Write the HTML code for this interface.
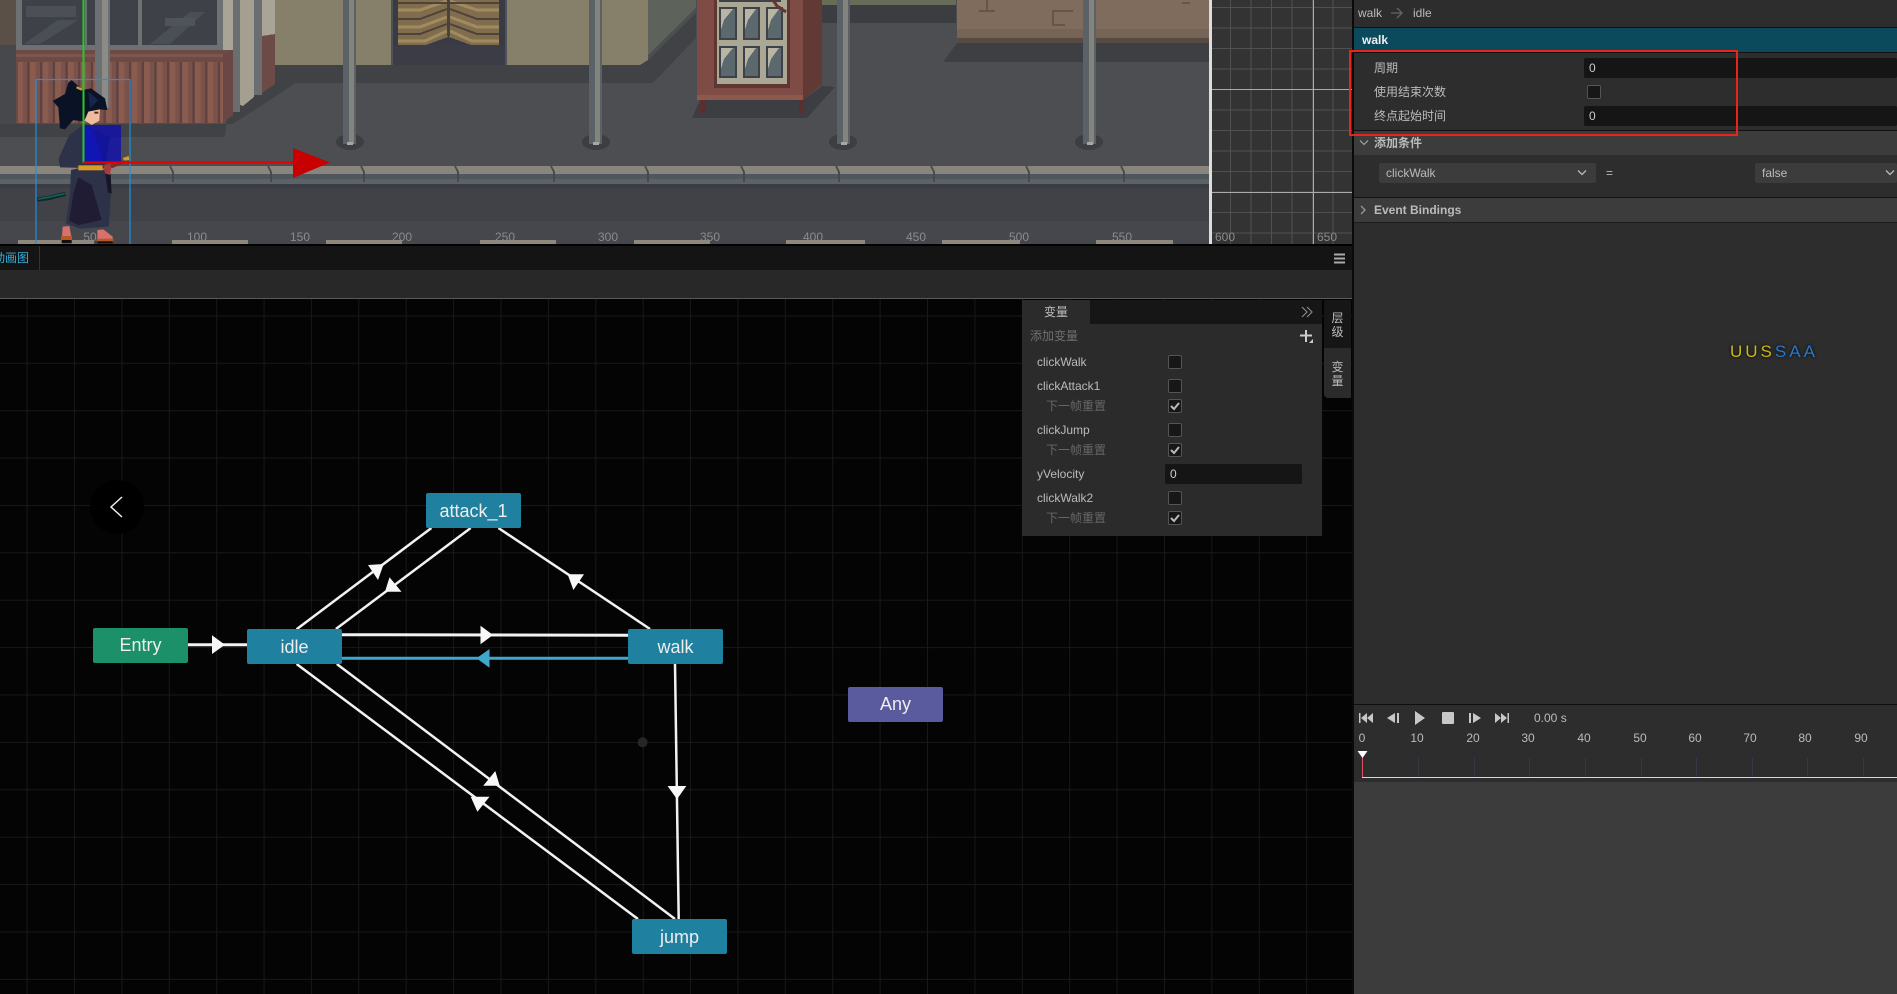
<!DOCTYPE html>
<html><head><meta charset="utf-8"><title>Animation Graph</title>
<style>
html,body{margin:0;padding:0;background:#2d2d2d;}
#app{position:relative;width:1897px;height:994px;overflow:hidden;background:#2d2d2d;font:12px "Liberation Sans","Noto Sans CJK SC",sans-serif;color:#bbb;}
.a{position:absolute;}
.t{position:absolute;white-space:nowrap;line-height:16px;}
.ruler{position:absolute;top:229px;width:40px;text-align:center;color:#8b8b8b;font-size:12px;line-height:16px;}
.node{position:absolute;width:95px;height:35px;line-height:37px;text-align:center;background:#20809f;color:#eee;font-size:18px;border-radius:2px;}
.cb{position:absolute;width:12px;height:12px;background:#171717;border:1px solid #555;border-radius:2px;}
.cb svg{position:absolute;left:0;top:0;}
.inp{position:absolute;background:#151515;border-radius:2px;color:#ccc;line-height:20px;padding-left:5px;box-sizing:border-box;height:20px;}
.sel{position:absolute;background:#3c3c3c;border-radius:2px;height:20px;line-height:20px;color:#bbb;padding-left:7px;box-sizing:border-box;}
.tl{position:absolute;top:730px;width:30px;text-align:center;color:#bbb;line-height:16px;}
.tick{position:absolute;top:758px;width:1px;height:19px;background:#343948;}
</style></head><body><div id="app">

<!-- scene -->
<svg class="a" style="left:0;top:0" width="1212" height="245" viewBox="0 0 1212 245" shape-rendering="crispEdges">
<defs><pattern id="st" width="12.7" height="62" patternUnits="userSpaceOnUse" x="17" y="62"><rect width="12.7" height="62" fill="#5f4240"/><rect x="0" width="10.4" height="62" fill="#8a5c50"/><rect x="6" width="4.4" height="62" fill="#7b5249"/></pattern>
<g id="wood"><rect x="398" y="0" width="50" height="37" fill="#7f6d4e"/><polygon points="398,37 448,37 448,37 426,45 398,45" fill="#7f6d4e"/>
<path d="M398 10H420L447 1M398 27H420L447 17M398 41H425L447 31" stroke="#a08a5e" stroke-width="3" fill="none"/>
<path d="M398 3H447M398 19H420L447 9M398 34H420L447 24" stroke="#4f4238" stroke-width="2" fill="none"/></g></defs>
<rect width="1212" height="245" fill="#4c4e52"/>
<rect x="0" y="0" width="16" height="45" fill="#5a5048"/><rect x="0" y="45" width="16" height="92" fill="#46484b"/>
<rect x="275" y="0" width="373" height="65" fill="#86806a"/>
<polygon points="648,0 696,0 696,8 648,55" fill="#5d635a"/>
<polygon points="275,65 640,65 648,60 696,13 696,38 653,83 275,83" fill="#404246"/>
<polygon points="0,124 233,124 296,83 275,65 233,65 225,137 0,137" fill="#404246"/>
<!-- shop -->
<rect x="16" y="0" width="207" height="50" fill="#6e7072"/>
<rect x="22" y="0" width="116" height="45" fill="#3e4148"/><rect x="142" y="0" width="75" height="45" fill="#3e4148"/>
<polygon points="24,44 58,20 78,20 40,44" fill="#4a4f55"/><polygon points="150,44 190,12 205,12 170,44" fill="#4a4f55"/>
<rect x="26" y="6" width="50" height="11" fill="#4c5056"/><rect x="165" y="18" width="30" height="8" fill="#4f545a"/>
<rect x="85" y="0" width="2" height="45" fill="#6e7072"/>
<rect x="16" y="50" width="217" height="12" fill="#6c4a46"/><rect x="16" y="54" width="207" height="3" fill="#7e5650"/>
<rect x="16" y="62" width="207" height="61" fill="url(#st)"/>
<rect x="16" y="62" width="2" height="61" fill="#6c4a46"/>
<polygon points="223,55 233,50 233,115 223,123" fill="#6a4644"/>
<rect x="223" y="0" width="10" height="50" fill="#a8a496"/>
<rect x="233" y="0" width="7" height="112" fill="#6a6e70"/>
<polygon points="240,0 254,0 254,97 243,106 240,105" fill="#a49f90"/>
<rect x="254" y="0" width="8" height="95" fill="#6a6e70"/>
<rect x="262" y="0" width="13" height="36" fill="#a8a496"/>
<polygon points="262,36 275,34 275,84 262,93" fill="#6c4a46"/>
<!-- pole behind char -->
<rect x="95" y="0" width="15" height="108" fill="#6c7074"/><rect x="102" y="0" width="6" height="108" fill="#8c8c86"/>
<!-- swing door -->
<rect x="391" y="0" width="116" height="65" fill="#3a3a44"/>
<rect x="391" y="0" width="2" height="65" fill="#4e5358"/><rect x="505" y="0" width="2" height="65" fill="#4e5358"/>
<use href="#wood"/><use href="#wood" transform="matrix(-1 0 0 1 897 0)"/>
<rect x="447" y="0" width="3" height="36" fill="#4a4238"/>
<rect x="393" y="45" width="112" height="20" fill="#3c3c46"/>
<!-- door cabinet -->
<polygon points="700,100 803,100 822,86 835,87 807,118 692,118" fill="#3d3e42"/>
<rect x="700" y="100" width="6" height="13" fill="#5a2f2e"/><rect x="799" y="100" width="5" height="13" fill="#5a2f2e"/>
<rect x="697" y="0" width="106" height="100" fill="#7f4c45"/>
<rect x="697" y="95" width="106" height="5" fill="#8f584d"/>
<polygon points="803,0 822,0 822,84 803,100" fill="#633936"/>
<rect x="714" y="0" width="76" height="88" fill="#5e3634"/>
<rect x="717" y="0" width="70" height="84" fill="#aaa795"/>
<g fill="#3e4248"><rect x="719" y="7" width="18" height="33"/><rect x="743" y="7" width="17" height="33"/><rect x="766" y="7" width="17" height="33"/><rect x="719" y="46" width="18" height="32"/><rect x="743" y="46" width="17" height="32"/><rect x="766" y="46" width="17" height="32"/><rect x="719" y="0" width="64" height="2"/></g>
<g fill="#5b686e"><rect x="721" y="9" width="14" height="29"/><rect x="745" y="9" width="13" height="29"/><rect x="768" y="9" width="13" height="29"/><rect x="721" y="48" width="14" height="28"/><rect x="745" y="48" width="13" height="28"/><rect x="768" y="48" width="13" height="28"/></g>
<g fill="#b8b5a4"><polygon points="721,9 733,9 724,20 721,30"/><polygon points="745,9 756,9 748,20 745,30"/><polygon points="768,9 779,9 771,20 768,30"/><polygon points="721,48 733,48 724,59 721,69"/><polygon points="745,48 756,48 748,59 745,69"/><polygon points="768,48 779,48 771,59 768,69"/></g>
<path d="M773 0l4 6 9 6" stroke="#6a3330" stroke-width="3" fill="none"/><rect x="781" y="0" width="5" height="3" fill="#aaa795"/>
<rect x="822" y="0" width="134" height="5" fill="#666c58"/><rect x="822" y="5" width="134" height="18" fill="#3b3d41"/>
<!-- crate -->
<polygon points="957,43 1209,43 1209,62 943,62" fill="#3d3f43"/>
<rect x="957" y="0" width="252" height="43" fill="#806c5c"/>
<rect x="957" y="29" width="252" height="9" fill="#766456"/><rect x="957" y="38" width="252" height="5" fill="#574a42"/>
<path d="M987 0v11M979 11h16M1073 11h-20v14h12M1190 3h-8" stroke="#665649" stroke-width="2" fill="none"/>
<!-- poles -->
<g><ellipse cx="350" cy="142" rx="14" ry="8" fill="#3d3e42"/><rect x="343" y="0" width="13" height="144" fill="#5a6268"/><rect x="349" y="0" width="5" height="144" fill="#84847e"/><rect x="347" y="142" width="6" height="3" fill="#a8a8a0"/></g>
<g><ellipse cx="596" cy="142" rx="14" ry="8" fill="#3d3e42"/><rect x="589" y="0" width="13" height="144" fill="#5a6268"/><rect x="595" y="0" width="5" height="144" fill="#84847e"/><rect x="593" y="142" width="6" height="3" fill="#a8a8a0"/></g>
<g><ellipse cx="843" cy="142" rx="14" ry="8" fill="#3d3e42"/><rect x="837" y="0" width="13" height="144" fill="#5a6268"/><rect x="843" y="0" width="5" height="144" fill="#84847e"/><rect x="841" y="142" width="6" height="3" fill="#a8a8a0"/></g>
<g><ellipse cx="1089" cy="142" rx="14" ry="8" fill="#3d3e42"/><rect x="1083" y="0" width="13" height="144" fill="#5a6268"/><rect x="1089" y="0" width="5" height="144" fill="#84847e"/><rect x="1087" y="142" width="6" height="3" fill="#a8a8a0"/></g>
<!-- curb & road -->
<rect x="0" y="166" width="1209" height="8" fill="#8a857c"/>
<rect x="0" y="174" width="1209" height="5" fill="#4f565c"/><rect x="0" y="179" width="1209" height="5" fill="#5b6268"/>
<rect x="0" y="184" width="1209" height="4" fill="#3c3d42"/>
<rect x="0" y="188" width="1209" height="33" fill="#414247"/>
<rect x="0" y="221" width="1209" height="24" fill="#46474d"/>
<path d="M170 166l3 6v10M268 166l3 6v10M361 166l3 6v10M455 166l3 6v10M551 166l3 6v10M645 166l3 6v10M741 166l3 6v10M836 166l3 6v10M931 166l3 6v10M1026 166l3 6v10M1121 166l3 6v10" stroke="#454a50" stroke-width="2" fill="none"/>
<g fill="#8d877c"><rect x="18" y="240" width="76" height="5"/><rect x="172" y="240" width="76" height="5"/><rect x="326" y="240" width="76" height="5"/><rect x="480" y="240" width="76" height="5"/><rect x="634" y="240" width="76" height="5"/><rect x="786" y="240" width="79" height="5"/><rect x="942" y="240" width="78" height="5"/><rect x="1096" y="240" width="77" height="5"/></g>
<rect x="1209" y="0" width="3" height="245" fill="#ddd"/>
</svg>

<!-- grid side -->
<div class="a" style="left:1212px;top:0;width:140px;height:245px;background-color:#333;background-image:linear-gradient(#505050 1px,transparent 1px),linear-gradient(90deg,#505050 1px,transparent 1px);background-size:20.5px 20.5px;background-position:18px 7px;"></div>
<div class="a" style="left:1212px;top:89px;width:140px;height:1px;background:#aaa;"></div>
<div class="a" style="left:1212px;top:192px;width:140px;height:1px;background:#aaa;"></div>
<div class="a" style="left:1313px;top:0;width:1px;height:245px;background:#aaa;"></div>

<!-- character and gizmo -->
<svg class="a" style="left:0;top:0" width="340" height="245" viewBox="0 0 340 245">
<g transform="translate(10 70) scale(.33333)">
<path d="M82 389l40-6 8-3 36-8" stroke="#0d2a2a" stroke-width="13" fill="none"/>
<path d="M84 387l38-6 8-3 34-7" stroke="#176058" stroke-width="5" fill="none"/>
<polygon points="178,195 215,168 300,200 285,295 150,292 146,265" fill="#2d3248"/>
<polygon points="183,300 205,295 285,300 303,370 296,470 210,476 168,460 180,370" fill="#2d3248"/>
<polygon points="205,322 245,345 275,450 205,465 178,452 190,370" fill="#1f1c34"/>
<polygon points="285,305 302,312 305,370 294,368" fill="#171626"/>
<polygon points="158,470 178,468 184,500 156,500" fill="#d87070"/>
<polygon points="262,480 280,478 308,500 308,508 262,508" fill="#d87070"/>
<rect x="153" y="498" width="33" height="12" fill="#b85a20"/><rect x="155" y="510" width="30" height="10" fill="#140f10"/>
<rect x="260" y="506" width="50" height="8" fill="#b85a20"/><rect x="262" y="514" width="46" height="6" fill="#140f10"/>
<rect x="205" y="286" width="73" height="15" fill="#d89a28"/>
<polygon points="280,285 305,282 300,315 285,310" fill="#a83c38"/>
<polygon points="300,285 345,270 350,276 305,295" fill="#7a2c2a"/>
<polygon points="338,264 356,258 358,270 342,272" fill="#d89a28"/>
<polygon points="225,125 270,118 268,152 245,165 222,150" fill="#f0bca0"/>
<rect x="253" y="125" width="12" height="6" fill="#5a2420"/>
<path d="M185 30L207 50L218 60L243 55L285 85L292 120L268 118L235 125L222 155L190 150L165 178L150 175L145 112L128 93L165 72L175 38Z" fill="#0a1226"/>
<path d="M235 65L265 90L240 115Z" fill="#14264a"/>
<rect x="199" y="52" width="18" height="7" fill="#d89a28" transform="rotate(25 208 55)"/>
<polygon points="222,170 245,240 222,252" fill="#8a60c0"/>
<polygon points="218,168 248,175 280,277 218,277" fill="#2436a8"/>
</g>
<rect x="83" y="125" width="38" height="37" fill="#0808b8" fill-opacity=".72"/>
<rect x="36" y="79.500" width="94" height="170" fill="none" stroke="#2090e0" stroke-width="1.200"/>
<rect x="82.500" y="0" width="2" height="163" fill="#28c828"/>
<rect x="83" y="161.500" width="212" height="2" fill="#e60000"/>
<polygon points="293,148 330,162.500 293,178" fill="#c80000"/>
</svg>

<div class="ruler" style="left:70px">50</div><div class="ruler" style="left:177px">100</div><div class="ruler" style="left:280px">150</div><div class="ruler" style="left:382px">200</div><div class="ruler" style="left:485px">250</div><div class="ruler" style="left:588px">300</div><div class="ruler" style="left:690px">350</div><div class="ruler" style="left:793px">400</div><div class="ruler" style="left:896px">450</div><div class="ruler" style="left:999px">500</div><div class="ruler" style="left:1102px">550</div><div class="ruler" style="left:1205px">600</div><div class="ruler" style="left:1307px">650</div>

<!-- tab bar -->
<div class="a" style="left:0;top:244px;width:1352px;height:2px;background:#000;"></div>
<div class="a" style="left:0;top:246px;width:1352px;height:24px;background:#141414;"></div>
<div class="a" style="left:0;top:246px;width:39px;height:24px;border-right:1px solid #333;overflow:hidden;"><span class="t" style="left:-7px;top:4px;color:#33aedb;">动画图</span></div>
<svg class="a" style="left:1333px;top:253px" width="13" height="11"><path d="M1 1.500h11M1 5.500h11M1 9.500h11" stroke="#aaa" stroke-width="2"/></svg>
<div class="a" style="left:0;top:270px;width:1352px;height:28px;background:#282828;"></div>
<div class="a" style="left:0;top:298px;width:1352px;height:1px;background:#5a5a5a;"></div>

<!-- graph -->
<div class="a" style="left:0;top:299px;width:1352px;height:695px;background-color:#040404;background-image:linear-gradient(#181818 1px,transparent 1px),linear-gradient(90deg,#181818 1px,transparent 1px);background-size:47.4px 47.4px;background-position:26.6px 16.4px;"></div>

<svg class="a" style="left:0;top:299px" width="1352" height="695" viewBox="0 299 1352 695">
<circle cx="117" cy="507" r="27" fill="#000"/>
<path d="M122 497l-11 10 11 10" stroke="#eee" stroke-width="1.500" fill="none"/>
<circle cx="642.600" cy="742.300" r="5" fill="#262626"/>
<g stroke="#f2f2f2" stroke-width="2.500" fill="none">
<line x1="188" y1="644.700" x2="248" y2="644.700" stroke-width="3"/>
<line x1="296.600" y1="629.300" x2="431.400" y2="528"/>
<line x1="470.700" y1="528" x2="335.900" y2="629"/>
<line x1="650" y1="629" x2="498.400" y2="528"/>
<line x1="342" y1="634.700" x2="628" y2="635.300" stroke-width="3"/>
<line x1="675" y1="664" x2="678.700" y2="919"/>
<line x1="336.800" y1="664" x2="675" y2="919"/>
<line x1="638" y1="919" x2="296.600" y2="664"/>
</g>
<line x1="342" y1="658.300" x2="628" y2="658.300" stroke="#3fa8cc" stroke-width="3"/>
<polygon points="489.500,649 476.500,658.300 489.500,667.700" fill="#3fa8cc"/>
<g fill="#f7f7f7">
<polygon points="212,635.300 225,644.700 212,654"/>
<polygon points="368,565 383.700,564 378,580"/>
<polygon points="389.500,577.300 401.500,591.700 385,591.700"/>
<polygon points="567.600,574.300 584,574.300 573.400,590"/>
<polygon points="480.500,625.700 493,635 480.500,644.300"/>
<polygon points="667.600,786 686.300,786 677,799.300"/>
<polygon points="495.300,771 499.700,785.700 483.200,785.700"/>
<polygon points="470.700,796.700 489.500,796.700 477.400,811.700"/>
</g>
</svg>

<div class="node" style="left:426px;top:493px;">attack_1</div>
<div class="node" style="left:93px;top:628px;background:#1c9068;line-height:35px;">Entry</div>
<div class="node" style="left:247px;top:629px;">idle</div>
<div class="node" style="left:628px;top:629px;">walk</div>
<div class="node" style="left:632px;top:919px;">jump</div>
<div class="node" style="left:848px;top:687px;background:#5a5a9e;line-height:35px;">Any</div>

<!-- variables panel -->
<div class="a" style="left:1022px;top:300px;width:300px;height:236px;background:#2b2b2b;"></div>
<div class="a" style="left:1090px;top:300px;width:232px;height:24px;background:#161616;"></div>
<div class="t" style="left:1022px;top:304px;width:68px;text-align:center;color:#bbb;">变量</div>
<svg class="a" style="left:1301px;top:306px" width="12" height="12"><path d="M1 1l5 5-5 5M6 1l5 5-5 5" stroke="#888" stroke-width="1.200" fill="none"/></svg>
<div class="t" style="left:1030px;top:328px;color:#6f6f6f;">添加变量</div>
<svg class="a" style="left:1300px;top:329px" width="14" height="14"><path d="M6 1v12M0 6.500h12" stroke="#ccc" stroke-width="2"/><path d="M13 10v4h-4z" fill="#ccc"/></svg>
<div class="t" style="left:1037px;top:354px;">clickWalk</div>
<div class="t" style="left:1037px;top:378px;">clickAttack1</div>
<div class="t" style="left:1046px;top:398px;color:#666;">下一帧重置</div>
<div class="t" style="left:1037px;top:422px;">clickJump</div>
<div class="t" style="left:1046px;top:442px;color:#666;">下一帧重置</div>
<div class="t" style="left:1037px;top:466px;">yVelocity</div>
<div class="t" style="left:1037px;top:490px;">clickWalk2</div>
<div class="t" style="left:1046px;top:510px;color:#666;">下一帧重置</div>
<div class="cb" style="left:1168px;top:355px;"></div>
<div class="cb" style="left:1168px;top:379px;"></div>
<div class="cb" style="left:1168px;top:399px;"><svg width="12" height="12"><path d="M2 6l3 3 5-6" stroke="#bbb" stroke-width="2" fill="none"/></svg></div>
<div class="cb" style="left:1168px;top:423px;"></div>
<div class="cb" style="left:1168px;top:443px;"><svg width="12" height="12"><path d="M2 6l3 3 5-6" stroke="#bbb" stroke-width="2" fill="none"/></svg></div>
<div class="inp" style="left:1165px;top:464px;width:137px;">0</div>
<div class="cb" style="left:1168px;top:491px;"></div>
<div class="cb" style="left:1168px;top:511px;"><svg width="12" height="12"><path d="M2 6l3 3 5-6" stroke="#bbb" stroke-width="2" fill="none"/></svg></div>

<div class="a" style="left:1324px;top:300px;width:27px;height:48px;background:#161616;border-radius:2px 0 0 0;"></div>
<div class="a" style="left:1324px;top:348px;width:27px;height:50px;background:#2b2b2b;border-radius:0 0 0 4px;"></div>
<div class="t" style="left:1324px;top:311px;width:27px;text-align:center;color:#bbb;line-height:14px;white-space:normal;">层<br>级</div>
<div class="t" style="left:1324px;top:360px;width:27px;text-align:center;color:#bbb;line-height:14px;white-space:normal;">变<br>量</div>

<!-- right panel -->
<div class="a" style="left:1352px;top:0;width:2px;height:994px;background:#0a0a0a;"></div>
<div class="a" style="left:1354px;top:0;width:543px;height:704px;background:#2d2d2d;"></div>
<div class="t" style="left:1358px;top:5px;">walk</div>
<svg class="a" style="left:1390px;top:6px" width="14" height="14"><path d="M1 7h11M7 2l5 5-5 5" stroke="#666" stroke-width="1.300" fill="none"/></svg>
<div class="t" style="left:1413px;top:5px;">idle</div>
<div class="a" style="left:1354px;top:27px;width:543px;height:1px;background:#111;"></div>
<div class="a" style="left:1354px;top:28px;width:543px;height:24px;background:#0b4a5c;"></div>
<div class="t" style="left:1362px;top:32px;color:#eee;font-weight:bold;">walk</div>
<div class="a" style="left:1354px;top:52px;width:543px;height:1px;background:#111;"></div>
<div class="t" style="left:1374px;top:60px;">周期</div>
<div class="inp" style="left:1584px;top:58px;width:313px;">0</div>
<div class="t" style="left:1374px;top:84px;">使用结束次数</div>
<div class="cb" style="left:1587px;top:85px;"></div>
<div class="t" style="left:1374px;top:108px;">终点起始时间</div>
<div class="inp" style="left:1584px;top:106px;width:313px;">0</div>
<div class="a" style="left:1354px;top:130px;width:543px;height:1px;background:#111;"></div>
<div class="a" style="left:1354px;top:131px;width:543px;height:24px;background:#3c3c3c;"></div>
<svg class="a" style="left:1358px;top:138px" width="12" height="10"><path d="M2 2.500l4 4 4-4" stroke="#999" stroke-width="1.300" fill="none"/></svg>
<div class="t" style="left:1374px;top:135px;font-weight:bold;">添加条件</div>
<div class="sel" style="left:1379px;top:163px;width:217px;">clickWalk</div>
<svg class="a" style="left:1576px;top:168px" width="12" height="10"><path d="M2 2.500l4 4 4-4" stroke="#bbb" stroke-width="1.300" fill="none"/></svg>
<div class="t" style="left:1606px;top:165px;">=</div>
<div class="sel" style="left:1755px;top:163px;width:142px;">false</div>
<svg class="a" style="left:1884px;top:168px" width="12" height="10"><path d="M2 2.500l4 4 4-4" stroke="#bbb" stroke-width="1.300" fill="none"/></svg>
<div class="a" style="left:1354px;top:197px;width:543px;height:1px;background:#111;"></div>
<div class="a" style="left:1354px;top:198px;width:543px;height:24px;background:#3c3c3c;"></div>
<svg class="a" style="left:1358px;top:204px" width="10" height="12"><path d="M3 2l4 4-4 4" stroke="#999" stroke-width="1.300" fill="none"/></svg>
<div class="t" style="left:1374px;top:202px;font-weight:bold;">Event Bindings</div>
<div class="a" style="left:1354px;top:222px;width:543px;height:1px;background:#1c1c1c;"></div>

<div class="t" style="left:1730px;top:342px;font-size:17px;line-height:20px;letter-spacing:3px;font-weight:400;text-shadow:0 0 3px #000;"><span style="color:#c8b818">UUS</span><span style="color:#2a78c8">SAA</span></div>

<!-- timeline -->
<div class="a" style="left:1354px;top:704px;width:543px;height:1px;background:#0e0e0e;"></div>
<div class="a" style="left:1354px;top:705px;width:543px;height:77px;background:#2d2d2d;"></div>
<svg class="a" style="left:1354px;top:705px" width="170" height="24" fill="#c8c8c8"><rect x="5" y="8" width="1.500" height="10"/><path d="M13 8v10l-6-5zM19 8v10l-6-5z"/><path d="M41 8v10l-8-5z"/><rect x="43" y="8" width="2" height="10"/><path d="M61 6v14l10-7z"/><rect x="88" y="7" width="12" height="12" rx="1"/><rect x="115" y="8" width="2" height="10"/><path d="M119 8v10l8-5z"/><path d="M141 8v10l6-5zM147 8v10l6-5z"/><rect x="153.500" y="8" width="1.500" height="10"/></svg>
<div class="t" style="left:1534px;top:710px;">0.00 s</div>
<div class="tl" style="left:1347px">0</div><div class="tl" style="left:1402px">10</div><div class="tl" style="left:1458px">20</div><div class="tl" style="left:1513px">30</div><div class="tl" style="left:1569px">40</div><div class="tl" style="left:1625px">50</div><div class="tl" style="left:1680px">60</div><div class="tl" style="left:1735px">70</div><div class="tl" style="left:1790px">80</div><div class="tl" style="left:1846px">90</div>
<div class="tick" style="left:1418px"></div><div class="tick" style="left:1474px"></div><div class="tick" style="left:1529px"></div><div class="tick" style="left:1585px"></div><div class="tick" style="left:1641px"></div><div class="tick" style="left:1696px"></div><div class="tick" style="left:1752px"></div><div class="tick" style="left:1807px"></div><div class="tick" style="left:1863px"></div>
<div class="a" style="left:1362px;top:777px;width:535px;height:1px;background:#d8d8d8;"></div>
<div class="a" style="left:1362px;top:756px;width:1px;height:21px;background:#e0506a;"></div>
<svg class="a" style="left:1357px;top:750px" width="11" height="9"><path d="M0.500 1h10l-5 7z" fill="#fff"/></svg>
<div class="a" style="left:1354px;top:782px;width:543px;height:212px;background:#3c3c3c;"></div>

<!-- red annotation -->
<div class="a" style="left:1349px;top:50px;width:389px;height:86px;border:2px solid #e8241c;box-sizing:border-box;"></div>

</div></body></html>
